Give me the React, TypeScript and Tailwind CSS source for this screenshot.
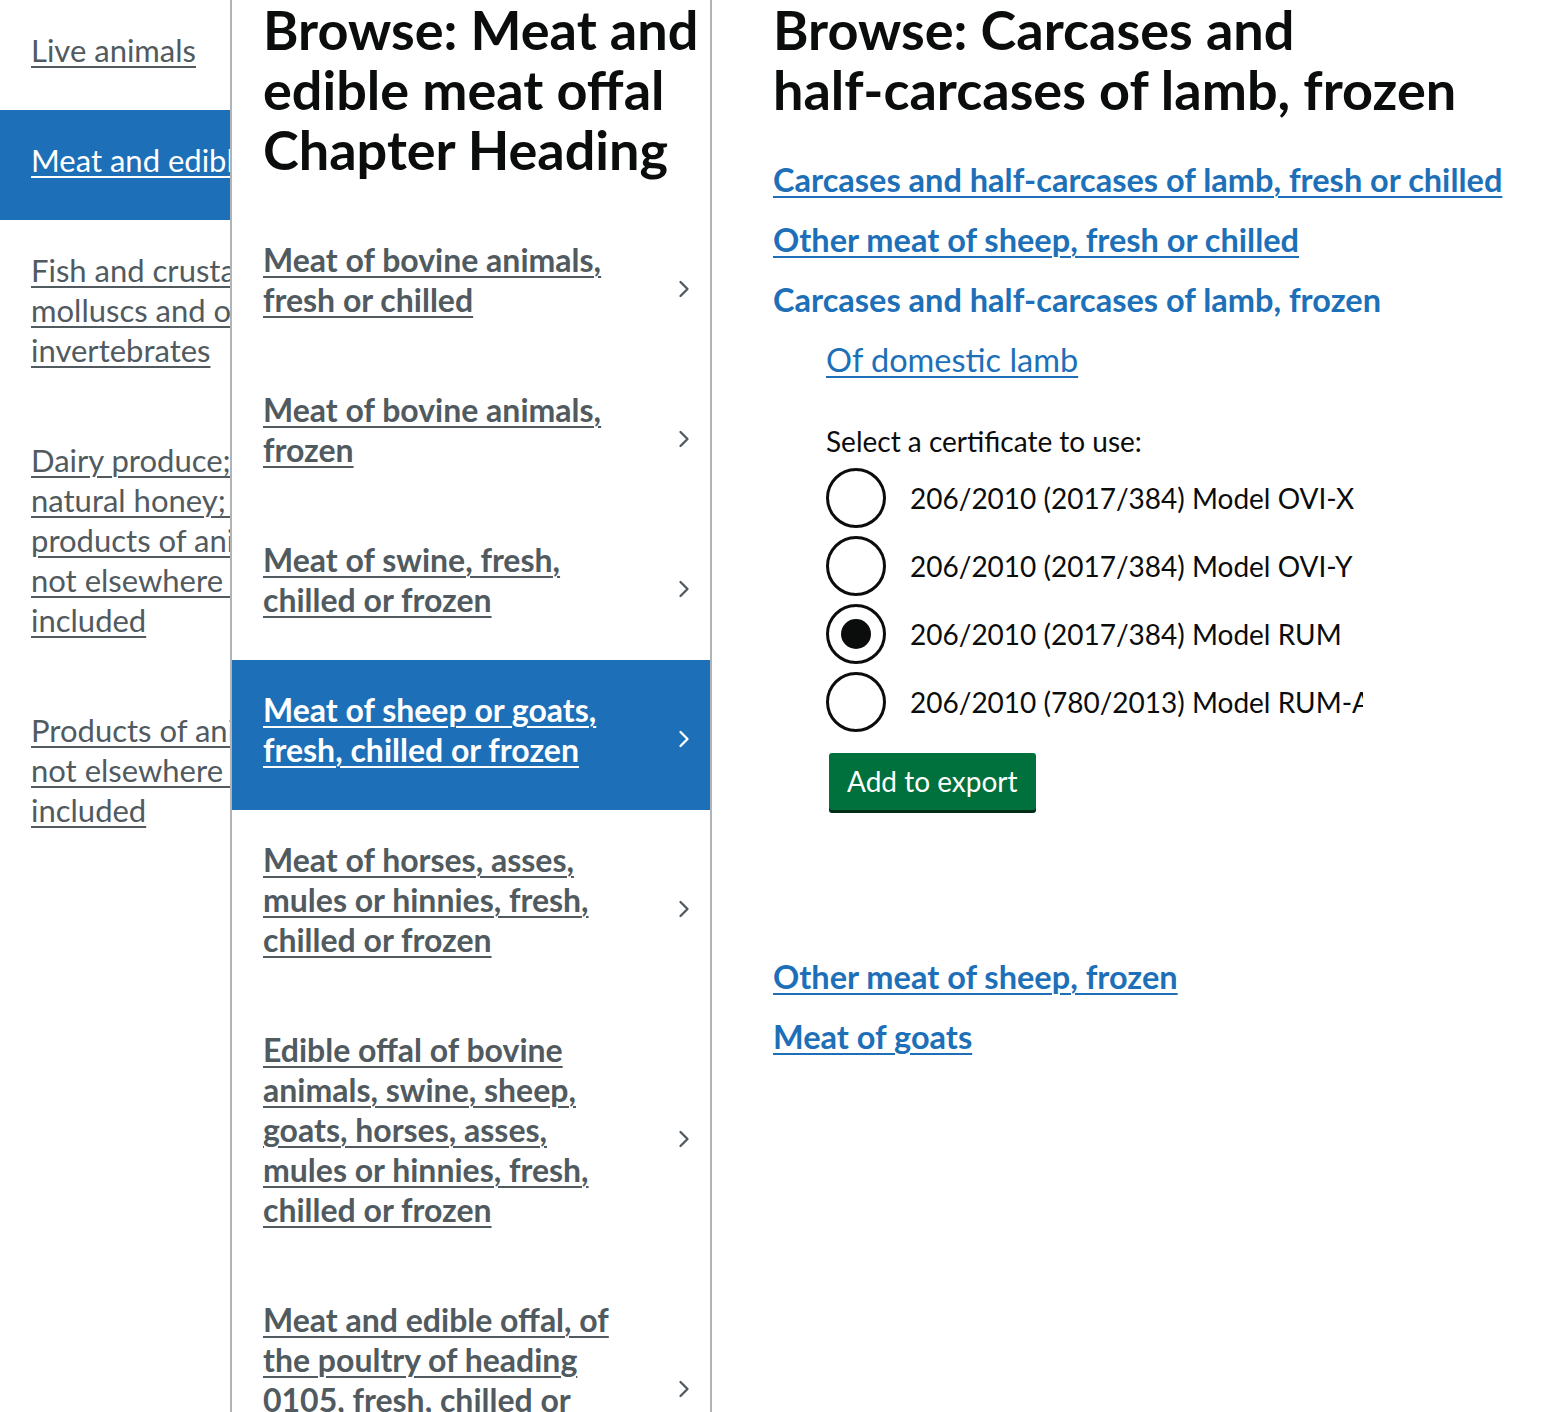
import { ChevronRight } from 'lucide-react'

const font = { fontFamily: 'Lato, "Noto Sans", sans-serif' }

const sections = [
  { lines: ['Live animals'] },
  { lines: ['Meat and edible meat offal'], active: true },
  { lines: ['Fish and crustaceans,', 'molluscs and other aquatic', 'invertebrates'] },
  {
    lines: [
      'Dairy produce; birds’ eggs;',
      'natural honey; edible',
      'products of animal origin,',
      'not elsewhere specified or',
      'included',
    ],
  },
  { lines: ['Products of animal origin,', 'not elsewhere specified or', 'included'] },
]

const headings = [
  { lines: ['Meat of bovine animals,', 'fresh or chilled'] },
  { lines: ['Meat of bovine animals,', 'frozen'] },
  { lines: ['Meat of swine, fresh,', 'chilled or frozen'] },
  { lines: ['Meat of sheep or goats,', 'fresh, chilled or frozen'], active: true },
  { lines: ['Meat of horses, asses,', 'mules or hinnies, fresh,', 'chilled or frozen'] },
  {
    lines: [
      'Edible offal of bovine',
      'animals, swine, sheep,',
      'goats, horses, asses,',
      'mules or hinnies, fresh,',
      'chilled or frozen',
    ],
  },
  { lines: ['Meat and edible offal, of', 'the poultry of heading', '0105, fresh, chilled or', 'frozen'] },
]

const certificates = [
  { id: 'ovi-x', label: '206/2010 (2017/384) Model OVI-X' },
  { id: 'ovi-y', label: '206/2010 (2017/384) Model OVI-Y' },
  { id: 'rum', label: '206/2010 (2017/384) Model RUM' },
  { id: 'rum-a', label: '206/2010 (780/2013) Model RUM-A' },
]

function Lines({ lines }: { lines: string[] }) {
  return (
    <>
      {lines.map((l, i) => (
        <span key={i}>
          {l}
          {i < lines.length - 1 && <br />}
        </span>
      ))}
    </>
  )
}

function Radio({ checked }: { checked?: boolean }) {
  return (
    <span className="flex h-[60px] w-[60px] shrink-0 items-center justify-center rounded-full border-[3px] border-[#0b0c0c] bg-white">
      {checked && <span className="h-[30px] w-[30px] rounded-full bg-[#0b0c0c]" />}
    </span>
  )
}

const link = 'underline decoration-[1.5px] underline-offset-[4px]'

export default function App() {
  return (
    <div className="flex h-[1412px] overflow-hidden bg-white text-[#0b0c0c]" style={font}>
      {/* sections */}
      <nav className="w-[232px] shrink-0 overflow-hidden border-r-2 border-[#b1b4b6]">
        <ul>
          {sections.map((s, i) => (
            <li
              key={i}
              className={`whitespace-nowrap pb-[40px] pl-[31px] pt-[30px] text-[31px] leading-[40px] ${
                s.active ? 'bg-[#1d70b8] text-white' : 'text-[#505a5f]'
              }`}
            >
              <a href="#" className={link}>
                <Lines lines={s.lines} />
              </a>
            </li>
          ))}
        </ul>
      </nav>

      {/* headings */}
      <section className="w-[480px] shrink-0 overflow-hidden border-r-2 border-[#b1b4b6]">
        <h1 className="whitespace-nowrap pb-[30px] pl-[31px] text-[54px] font-bold leading-[60px]">
          Browse: Meat and
          <br />
          edible meat offal
          <br />
          Chapter Heading
        </h1>
        <ul>
          {headings.map((h, i) => (
            <li
              key={i}
              className={`flex items-center justify-between pb-[40px] pl-[31px] pr-[12px] pt-[30px] ${
                h.active ? 'bg-[#1d70b8] text-white' : 'text-[#505a5f]'
              }`}
            >
              <a href="#" className={`whitespace-nowrap text-[32px] font-bold leading-[40px] ${link}`}>
                <Lines lines={h.lines} />
              </a>
              <ChevronRight className="mt-[18px] h-7 w-7" strokeWidth={2} />
            </li>
          ))}
        </ul>
      </section>

      {/* commodities */}
      <main className="flex-1 pl-[61px] pr-[30px]">
        <h1 className="whitespace-nowrap pb-[30px] text-[54px] font-bold leading-[60px]">
          Browse: Carcases and
          <br />
          half-carcases of lamb, frozen
        </h1>
        <ul className="whitespace-nowrap text-[32.5px] font-bold leading-[60px] text-[#1d70b8]">
          <li>
            <a href="#" className={link}>
              Carcases and half-carcases of lamb, fresh or chilled
            </a>
          </li>
          <li>
            <a href="#" className={link}>
              Other meat of sheep, fresh or chilled
            </a>
          </li>
          <li>
            <span>Carcases and half-carcases of lamb, frozen</span>
            <div className="pl-[53px]">
              <a href="#" className={`font-normal ${link}`}>
                Of domestic lamb
              </a>
              <div className="w-[537px] overflow-hidden pb-[134px] pt-[31px] font-normal text-[#0b0c0c]">
                <p className="text-[28px] leading-[40px]">Select a certificate to use:</p>
                <div className="mt-[7px] flex flex-col gap-[8px]">
                  {certificates.map((c) => (
                    <label key={c.id} className="flex items-center gap-[24px] text-[28px] leading-[60px]">
                      <Radio checked={c.id === 'rum'} />
                      {c.label}
                    </label>
                  ))}
                </div>
                <button className="mb-[3px] ml-[3px] mt-[21px] rounded-[3px] bg-[#00703c] px-[18px] text-[28px] leading-[57px] text-white shadow-[0_3px_0_#002d18]">
                  Add to export
                </button>
              </div>
            </div>
          </li>
          <li>
            <a href="#" className={link}>
              Other meat of sheep, frozen
            </a>
          </li>
          <li>
            <a href="#" className={link}>
              Meat of goats
            </a>
          </li>
        </ul>
      </main>
    </div>
  )
}
